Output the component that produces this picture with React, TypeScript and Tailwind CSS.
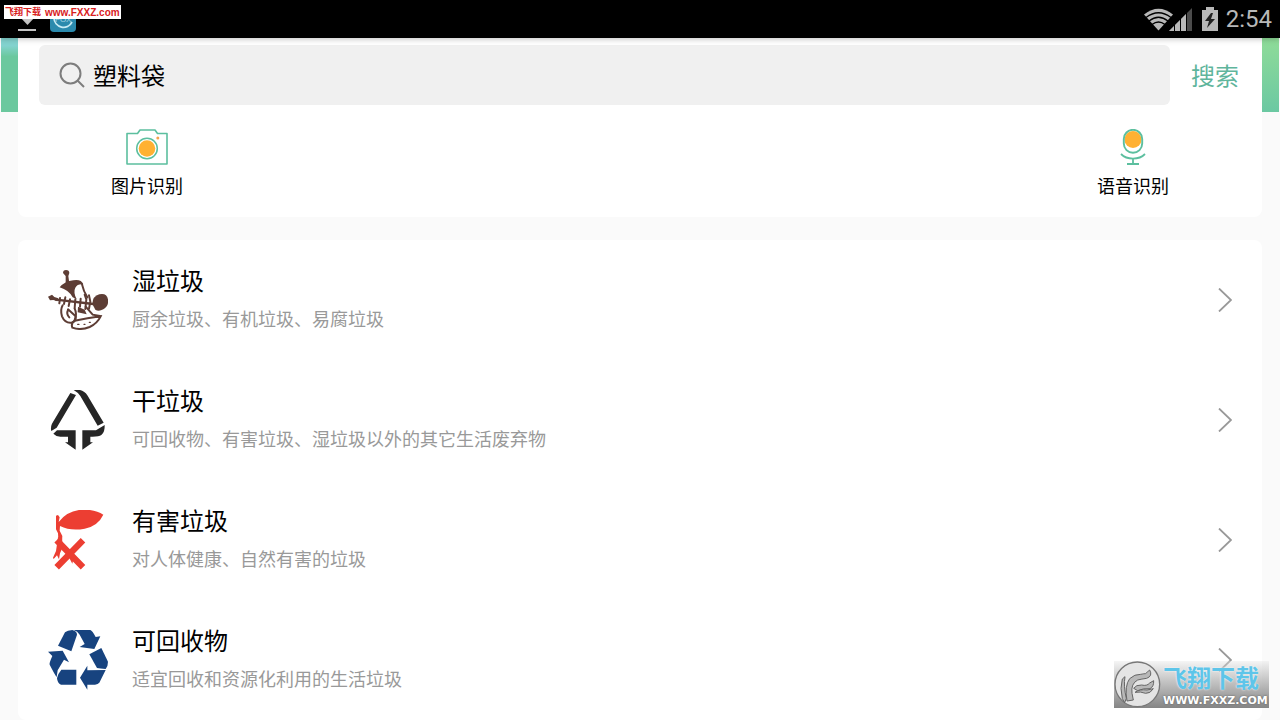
import React from "react";

type Category = {
  name: string;
  description: string;
  href: string;
  icon: React.ReactNode;
};

const IconCamera: React.FC = () => (
  <svg className="h-9 w-[42px]" viewBox="0 0 42 36" fill="none">
    <path
      d="M1 4.5H11.5L14 1H29L31.5 4.5H41V35H1Z"
      stroke="#5cbf9f"
      strokeWidth="1.6"
      strokeLinejoin="round"
    />
    <circle cx="21" cy="19.5" r="10.3" stroke="#5cbf9f" strokeWidth="1.5" />
    <circle cx="21" cy="19.5" r="8.3" fill="#ffb132" />
    <circle cx="31.8" cy="9" r="1.5" fill="#f5a44c" />
  </svg>
);

const IconMicrophone: React.FC = () => (
  <svg className="h-9 w-[26px]" viewBox="0 0 26 36" fill="none">
    <circle cx="13" cy="10.5" r="8.5" fill="#ffb132" />
    <rect x="3.8" y="0.8" width="18.4" height="23" rx="9.2" stroke="#5cbf9f" strokeWidth="1.9" />
    <path d="M1 25C7 31.2 19 31.2 25 25M13 30V35M7 35H19" stroke="#5cbf9f" strokeWidth="1.8" />
  </svg>
);

const IconFood: React.FC = () => (
  <svg className="size-[60px]" viewBox="24 30 180 180" fill="none">
    <g fill="#5d3d35">
      <path d="M69 39Q69 30 78 30Q88 30 88 39L85 48L88 70H77L77 48Z" />
      <path d="M59 82Q74 64 100 61Q124 57 130 73Q112 71 106 83Q99 96 110 118L98 112Q86 90 59 82Z" />
      <path d="M24 110L36 104L43 111L55 115L52 124L40 120L30 121Z" />
      <path d="M157 132Q158 108 178 103Q200 98 204 118Q207 138 190 148Q176 156 166 149Z" />
      <path d="M114 140L134 149L140 163L113 157Z" />
    </g>
    <g stroke="#5d3d35" strokeWidth="6" strokeLinecap="round">
      <path d="M48 119L160 132" strokeWidth="7" />
      <path d="M60 114L58 130M76 112L72 132M90 118L86 138M106 118L104 144M122 116L120 140M134 104L139 118L136 147M147 106L151 125L147 146" />
      <path d="M126 73Q130 92 142 112M68 136Q60 150 66 169Q75 190 94 188Q109 185 107 169L84 148M84 150Q78 162 88 172" />
      <path d="M104 182Q92 190 97 203Q122 212 149 201Q172 190 182 169Q142 174 104 182Z" />
      <path d="M137 140L158 164L180 168M104 146Q112 162 104 180" />
      <path d="M113 193H117M132 193H135M148 187H151" strokeWidth="4" />
    </g>
  </svg>
);

const IconResidual: React.FC = () => (
  <svg className="size-[60px]" viewBox="24 30 180 180" fill="#262626">
    <path d="M91 39L108 45L50 143L34 153Q30 139 39 126Z" />
    <path d="M101 30H120Q134 33 143 47L191 128L173 137L121 48Q115 38 101 30Z" />
    <path d="M51 151H107V209L75 187H84V170H61Q47 169 40 161Z" />
    <path d="M127 151H168L194 135Q195 157 184 165Q176 171 151 170V187H159L127 209Z" />
  </svg>
);

const IconHazard: React.FC = () => (
  <svg className="size-[60px]" viewBox="24 30 180 180" fill="#ec3e32">
    <path d="M56 66Q84 29 132 29Q168 29 190 44Q174 78 134 86Q92 94 60 78L59 92L67 108L66 122L55 118L54 100L48 88V47L54 45L59 52Z" />
    <path d="M50 121L129 202M129 121L50 202" stroke="#ec3e32" strokeWidth="19" />
    <path d="M54 112H66L68 142L60 160L57 178L51 166L41 177L39 173L48 153ZM88 174L101 174L97 191Z" />
  </svg>
);

const IconRecycle: React.FC = () => (
  <svg className="size-[60px]" viewBox="24 30 180 180" fill="#17437f">
    <path d="M54 77L75 37Q82 31 97 30Q111 34 111 44L94 94Z" />
    <path d="M101 30H151Q157 32 167 51L181 49L163 87L119 81L134 72L119 44Q113 34 101 30Z" />
    <path d="M24 95L68 92L87 127L72 119L53 151L50 171Q45 165 29 134Q27 130 37 108Z" />
    <path d="M64 149H109V194H63Q52 190 51 174Q53 162 64 149Z" />
    <path d="M148 103L184 84L204 125Q204 139 197 147Q180 146 171 144Z" />
    <path d="M120 173L142 137V151L197 150L178 188Q174 193 165 194H142V209Z" />
  </svg>
);

const categories: Category[] = [
  {
    name: "湿垃圾",
    description: "厨余垃圾、有机垃圾、易腐垃圾",
    href: "#wet",
    icon: <IconFood />,
  },
  {
    name: "干垃圾",
    description: "可回收物、有害垃圾、湿垃圾以外的其它生活废弃物",
    href: "#dry",
    icon: <IconResidual />,
  },
  {
    name: "有害垃圾",
    description: "对人体健康、自然有害的垃圾",
    href: "#hazardous",
    icon: <IconHazard />,
  },
  {
    name: "可回收物",
    description: "适宜回收和资源化利用的生活垃圾",
    href: "#recyclable",
    icon: <IconRecycle />,
  },
];

const StatusBar: React.FC = () => (
  <header className="relative z-10 flex h-[38px] items-center justify-between bg-black pr-2 pl-[18px] shadow-[0_1px_6px_rgba(0,0,0,0.25)]">
    <div className="flex items-center gap-3">
      {/* Download notification */}
      <svg className="h-6 w-5" viewBox="0 0 20 24" fill="#c4c4c4">
        <path d="M6 2H13V10H17L9.5 18L2 10H6Z" />
        <path d="M0 22H18V24H0Z" />
      </svg>
      {/* Running app */}
      <svg className="size-[26px]" viewBox="0 0 26 26" fill="none">
        <rect width="26" height="26" rx="4" fill="#2b8aad" />
        <path d="M4 12A9.5 9.5 0 0 0 22 16" stroke="#c8ebf4" strokeWidth="1.8" />
        <text x="5" y="16" fontSize="8" fill="#a9d6e4" fontFamily="Liberation Sans, sans-serif">
          FOX
        </text>
      </svg>
    </div>
    <div className="flex items-center text-[#b8b8b8]">
      <svg className="h-6 w-[50px]" viewBox="0 0 50 24" fill="none">
        <path d="M0 7.5Q14.5 -4 29 7.5L14.5 23.5Z" fill="currentColor" />
        <path
          d="M2 10.5Q14.5 1 27 10.5M5 14Q14.5 6.5 24 14M8 17.5Q14.5 12.5 21 17.5"
          stroke="#000000"
          strokeWidth="1.3"
        />
        <path d="M25 24L48 1V24Z" fill="#4b4b4b" />
        <path d="M25 24L42 7V24Z" fill="currentColor" />
        <path d="M30.5 16V24M36.5 10V24M42.5 5V24" stroke="#000000" strokeWidth="1" />
      </svg>
      <svg className="ml-2 h-6 w-4" viewBox="0 0 16 24" fill="none">
        <path d="M4 0H12V3H16V24H0V3H4Z" fill="currentColor" />
        <path d="M9 6L3 14H7L5 21L13 12H9L11 6Z" fill="#222222" />
      </svg>
      <time className="ml-2 font-[Roboto,sans-serif] text-2xl">2:54</time>
    </div>
  </header>
);

const SearchCard: React.FC = () => (
  <section className="col-start-1 row-start-1 mx-[18px] rounded-b-lg bg-white px-[21px] pt-[7px] pb-5">
    <form className="flex items-center" onSubmit={(e) => e.preventDefault()}>
      <label className="flex h-[60px] grow items-center gap-2 rounded-md bg-[#f0f0f0] px-5">
        <svg className="size-[26px] shrink-0" viewBox="0 0 26 26" fill="none" stroke="#7d7d7d" strokeWidth="2">
          <circle cx="11.5" cy="11.5" r="10" />
          <path d="M18.5 18.5L25 25" />
        </svg>
        <input
          className="min-w-0 grow bg-transparent text-2xl text-black outline-none"
          type="text"
          defaultValue="塑料袋"
          aria-label="搜索垃圾"
        />
      </label>
      <button className="pr-0.5 pl-[21px] text-2xl whitespace-nowrap text-[#5fb59c]" type="submit">
        搜索
      </button>
    </form>
    <div className="mt-6 flex justify-between px-[72px]">
      <button className="flex flex-col items-center gap-2 text-lg leading-6 text-black" type="button">
        <IconCamera />
        图片识别
      </button>
      <button className="flex flex-col items-center gap-2 text-lg leading-6 text-black" type="button">
        <IconMicrophone />
        语音识别
      </button>
    </div>
  </section>
);

const CategoryRow: React.FC<{ category: Category }> = ({ category }) => (
  <li>
    <a className="flex h-[120px] items-center px-[30px]" href={category.href}>
      {category.icon}
      <div className="ml-6 grow pb-1">
        <h2 className="text-2xl leading-10 text-black">{category.name}</h2>
        <p className="text-lg leading-9 text-[#999999]">{category.description}</p>
      </div>
      <svg className="h-6 w-[14px]" viewBox="0 0 14 24" fill="none" stroke="#999999" strokeWidth="1.8">
        <path d="M1 0.5L13 12L1 23.5" />
      </svg>
    </a>
  </li>
);

const SiteTag: React.FC = () => (
  <div className="absolute top-[5px] left-1 z-20 flex h-[14px] w-[117px] items-center gap-1 bg-white pl-px whitespace-nowrap text-[#d8201d]">
    <span className="text-[9px] font-bold">飞翔下载</span>
    <span className="font-['Liberation_Sans',sans-serif] text-[10px] font-bold">www.FXXZ.com</span>
  </div>
);

const SiteLogo: React.FC = () => (
  <div className="absolute right-[11px] bottom-3 z-20 flex h-[47px] w-[155px] items-center gap-0.5 bg-linear-to-b from-[#e6e6e6]/40 to-[#858585]">
    <svg className="size-[47px] shrink-0" viewBox="0 0 141 141" fill="none">
      <circle cx="70" cy="70" r="67" fill="#e4e4e4" stroke="#777777" strokeWidth="4" />
      <g fill="#b8b8b8" stroke="#666666" strokeWidth="3">
        <path d="M25 113Q17 81 25 54L33 47Q28 75 37 112L32 125Z" />
        <path d="M39 120Q31 74 47 53Q62 39 80 40Q96 42 107 27Q117 45 98 52Q83 54 71 57Q50 68 54 97L58 117Z" />
        <path d="M59 82Q66 71 83 72Q99 76 107 66L119 59Q120 77 108 83Q89 81 71 89Z" />
        <path d="M63 94Q77 84 99 87L118 83Q109 98 95 97Q80 91 63 94Z" />
      </g>
    </svg>
    <div className="flex flex-col gap-1 whitespace-nowrap">
      <span className="text-2xl leading-7 font-bold text-[#5ec5e9] [text-shadow:0_0_2px_white]">飞翔下载</span>
      <span className="font-['DejaVu_Sans',sans-serif] text-[11px] leading-3 font-bold text-white [text-shadow:0_0_2px_#555555]">
        WWW.FXXZ.COM
      </span>
    </div>
  </div>
);

const App: React.FC = () => {
  return (
    <div className="relative min-h-screen overflow-hidden bg-[#fafafa] font-['Noto_Sans_CJK_SC',sans-serif]">
      <StatusBar />
      <main>
        <div className="grid">
          {/* Banner showing on both sides of the search card */}
          <div className="col-start-1 row-start-1 mx-px flex h-[74px] justify-between">
            <div className="w-1/2 bg-linear-to-b from-[#83d3cf] from-10% to-[#6bc89e] to-25%" />
            <div className="w-1/2 bg-linear-to-b from-[#8fdc98] to-[#6bc8a2]" />
          </div>
          <SearchCard />
        </div>
        <ul className="mx-[18px] mt-[23px] rounded-lg bg-white">
          {categories.map((category) => (
            <CategoryRow key={category.name} category={category} />
          ))}
        </ul>
      </main>
      <SiteTag />
      <SiteLogo />
    </div>
  );
};

export default App;
